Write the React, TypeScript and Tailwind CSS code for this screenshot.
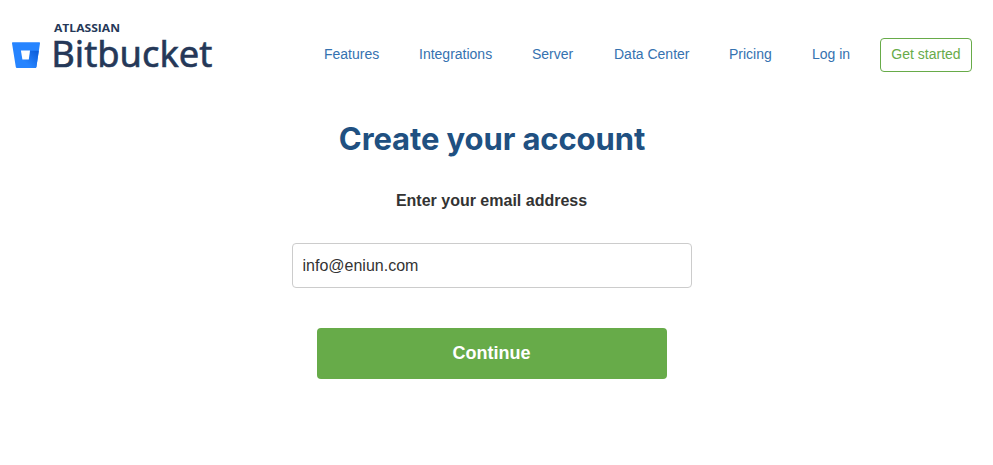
import React from "react";

const links = [
  { label: "Features", width: "w-[55px]" },
  { label: "Integrations", width: "w-[73px]" },
  { label: "Server", width: "w-[42px]" },
  { label: "Data Center", width: "w-[75px]" },
  { label: "Pricing", width: "w-[43px]" },
  { label: "Log in", width: "w-[38px]" },
];

function Logo() {
  return (
    <svg width="230" height="76" viewBox="0 0 230 76" className="block" role="img" aria-label="Atlassian Bitbucket">
      <defs>
        <linearGradient id="fold" gradientUnits="userSpaceOnUse" x1="37" y1="33" x2="26" y2="46">
          <stop offset="0" stopColor="#0b5bd8" />
          <stop offset="1" stopColor="#2684ff" />
        </linearGradient>
      </defs>
      <path d="M12.8 25.2 H39.2 Q40.2 25.2 40 26.2 L36.4 49.9 Q36.2 51 35.1 51 H17.1 Q16 51 15.8 49.9 L12 26.2 Q11.8 25.2 12.8 25.2Z" fill="#2684ff" />
      <path d="M38.8 33.8 H30 L28.8 42 H23 L16.5 50.7 Q16.8 51 17.2 51 H35.1 Q36.2 51 36.4 49.9Z" fill="url(#fold)" />
      <path d="M20.9 33.5 H30 L28.8 42.4 H22.4Z" fill="#fff" />
      <text x="54" y="15" fontFamily="'Open Sans', sans-serif" fontWeight="700" fontSize="10.7" textLength="66" lengthAdjust="spacingAndGlyphs" fill="#253858">ATLASSIAN</text>
      <text x="51.3" y="50.4" fontFamily="'Noto Sans', sans-serif" fontWeight="400" fontSize="36.6" textLength="161" lengthAdjust="spacingAndGlyphs" fill="#253858" stroke="#253858" strokeWidth="0.6">Bitbucket</text>
    </svg>
  );
}

export default function App() {
  return (
    <div className="h-[465px] w-[993px] overflow-hidden bg-white font-['Liberation_Sans',Arial,sans-serif] text-[#333]">
      <header className="flex h-[106px] items-start">
        <div className="w-[324px] pt-[17px]"><Logo /></div>
        <nav className="mt-[37px] flex h-[34px] items-center gap-10 text-sm whitespace-nowrap text-[#3572b0]">
          {links.map((l) => <a key={l.label} className={l.width}>{l.label}</a>)}
        </nav>
        <button className="mt-[38px] ml-[30px] h-[34px] w-[92px] rounded border border-[#67ab49] pb-[2px] text-sm whitespace-nowrap text-[#67ab49]">Get started</button>
      </header>
      <main className="flex w-[984px] flex-col items-center">
        <h1 className="mt-[9px] h-12 font-['Inter',sans-serif] text-[31px] leading-[48px] font-bold tracking-[-0.1px] whitespace-nowrap text-[#205081]">Create your account</h1>
        <label className="mt-[26px] pr-px text-base leading-6 font-bold">Enter your email address</label>
        <input className="mt-[30px] h-[45px] w-[400px] rounded border border-[#ccc] px-[9.5px] text-base text-[#333] outline-none" defaultValue="info@eniun.com" />
        <button className="mt-10 h-[51px] w-[350px] rounded bg-[#67ab49] pr-px pb-[2px] text-lg font-bold text-white">Continue</button>
      </main>
    </div>
  );
}
